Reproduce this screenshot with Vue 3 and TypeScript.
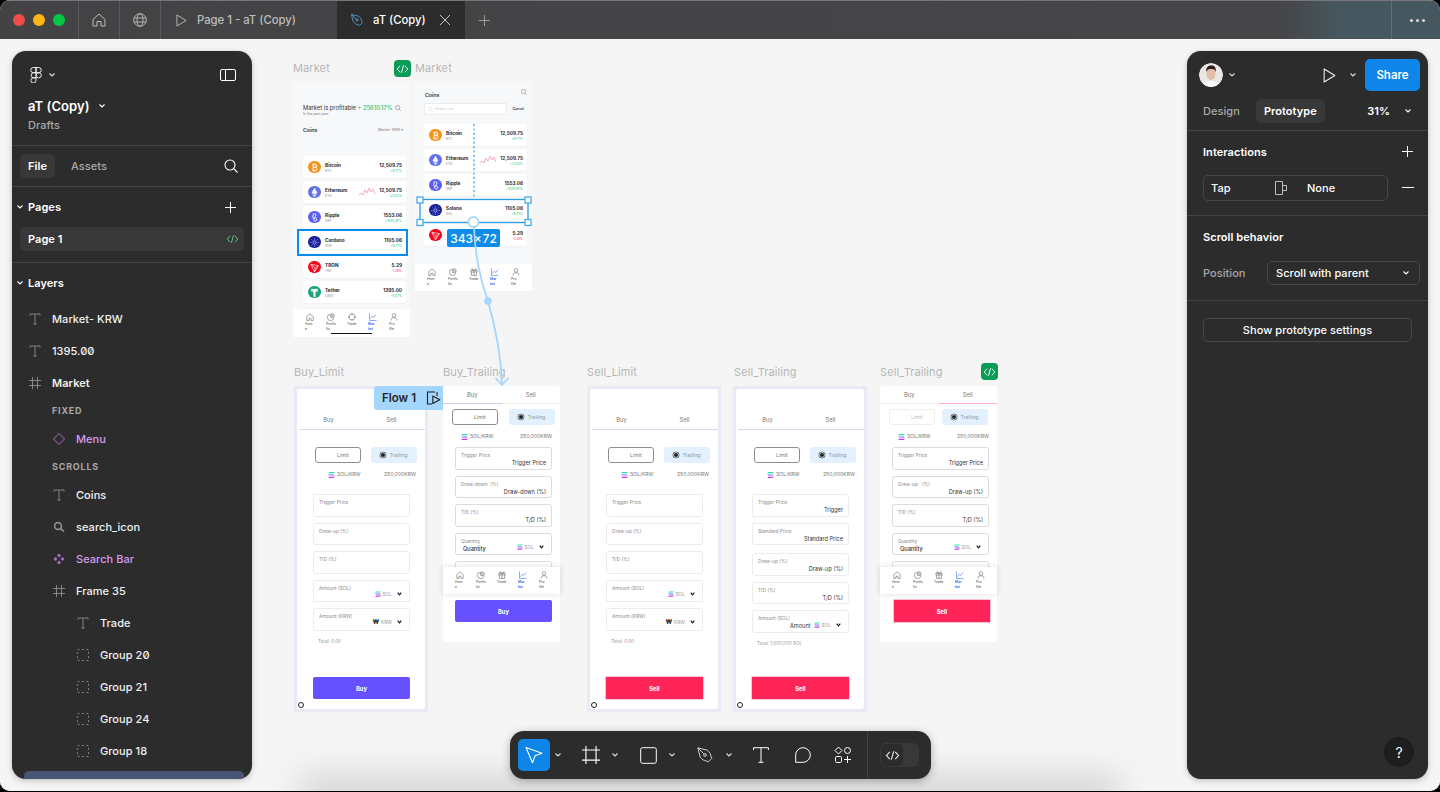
<script setup lang="ts">
type Coin = { name: string; sym: string; price: string; change: string; down?: boolean; color: string; icon: string; spark?: boolean; sel?: boolean }
type Field = { label: string; value?: string; pick?: string; left?: boolean }
type Form = { name: string; x: number; tall: boolean; side: string; soft?: boolean; faint?: boolean; total?: string; fields: Field[]; nudge?: boolean }

const labels = [
  { t: 'Market', x: 293, y: 61 }, { t: 'Market', x: 415, y: 61 },
  { t: 'Buy_Limit', x: 294, y: 365 }, { t: 'Buy_Trailing', x: 443, y: 365 },
  { t: 'Sell_Limit', x: 587, y: 365 }, { t: 'Sell_Trailing', x: 734, y: 365 }, { t: 'Sell_Trailing', x: 880, y: 365 }
]
const at = (x: number, y: number) => ({ left: `${x}px`, top: `${y - 39}px` })

const btc: Coin = { name: 'Bitcoin', sym: 'BTC', price: '12,509.75', change: '+9.77%', color: '#f7931a', icon: 'c-btc' }
const eth: Coin = { name: 'Ethereum', sym: 'ETH', price: '12,509.75', change: '+21.00%', color: '#6272e6', icon: 'c-eth', spark: true }
const xrp: Coin = { name: 'Ripple', sym: 'XRP', price: '1553.06', change: '+1000.97%', color: '#5b5ff2', icon: 'c-xrp' }
const trx: Coin = { name: 'TRON', sym: 'TRX', price: '5.29', change: '-1.38%', down: true, color: '#f5051b', icon: 'c-trx' }
const coinsA: Coin[] = [btc, eth, xrp,
  { name: 'Cardano', sym: 'ADA', price: '1105.06', change: '+9.77%', color: '#1c1f9a', icon: 'c-ada', sel: true },
  trx,
  { name: 'Tether', sym: 'USDT', price: '1395.00', change: '+0.07%', color: '#1ba27a', icon: 'c-usdt' }]
const coinsB: Coin[] = [btc, eth, xrp,
  { name: 'Solana', sym: 'SOL', price: '1105.06', change: '+9.77%', color: '#1c1f9a', icon: 'c-ada' },
  { ...trx, name: '', sym: '' }]

const navA = [
  { t: 'Hom\ne', i: 'n-home' }, { t: 'Portfo\nlio', i: 'n-pie' }, { t: 'Trade', i: 'n-coin' },
  { t: 'Mar\nket', i: 'n-chart', on: true }, { t: 'Pro\nfile', i: 'n-user' }
]
const navB = navA.map(n => (n.i === 'n-coin' ? { ...n, i: 'n-gift' } : n))

const limitFields: Field[] = [
  { label: 'Trigger Price' }, { label: 'Draw-up (%)' }, { label: 'T/D (%)' },
  { label: 'Amount (SOL)', pick: 'SOL' }, { label: 'Amount (KRW)', pick: 'KRW' }
]
const forms: Form[] = [
  { name: 'Buy_Limit', x: 294, tall: true, side: 'buy', total: 'Total: 0.00', fields: limitFields },
  {
    name: 'Buy_Trailing', x: 443, tall: false, side: 'buy', fields: [
      { label: 'Trigger Price', value: 'Trigger Price' }, { label: 'Draw-down  (%)', value: 'Draw-down (%)' },
      { label: 'T/D (%)', value: 'T/D (%)' }, { label: 'Quantity', value: 'Quantity', pick: 'SOL', left: true }, { label: 'Amount (KRW)' }
    ]
  },
  { name: 'Sell_Limit', x: 587, tall: true, side: 'sell', total: 'Total: 0.00', fields: limitFields },
  {
    name: 'Sell_Trailing', x: 733, tall: true, side: 'sell', total: 'Total: 1,000,000 SOL', nudge: true, fields: [
      { label: 'Trigger Price', value: 'Trigger' }, { label: 'Standard Price', value: 'Standard Price' },
      { label: 'Draw-up (%)', value: 'Draw-up (%)' }, { label: 'T/D (%)', value: 'T/D (%)' },
      { label: 'Amount (SOL)', value: 'Amount', pick: 'SOL' }
    ]
  },
  {
    name: 'Sell_Trailing', x: 880, tall: false, side: 'sell', faint: true, fields: [
      { label: 'Trigger Price', value: 'Trigger Price' }, { label: 'Draw-up   (%)', value: 'Draw-up (%)' },
      { label: 'T/D (%)', value: 'T/D (%)' }, { label: 'Quantity', value: 'Quantity', pick: 'SOL', left: true }, { label: 'Amount (KRW)' }
    ]
  }
]

const layers = [
  { t: 'Market- KRW', i: 'l-text', lv: 0 }, { t: '1395.00', i: 'l-text', lv: 0 }, { t: 'Market', i: 'l-frame', lv: 0, bold: true },
  { head: 'FIXED' }, { t: 'Menu', i: 'l-diamond', lv: 1, purple: true }, { head: 'SCROLLS' },
  { t: 'Coins', i: 'l-text', lv: 1 }, { t: 'search_icon', i: 'l-search', lv: 1 }, { t: 'Search Bar', i: 'l-comp', lv: 1, purple: true },
  { t: 'Frame 35', i: 'l-frame', lv: 1 }, { t: 'Trade', i: 'l-text', lv: 2 }, { t: 'Group 20', i: 'l-group', lv: 2 },
  { t: 'Group 21', i: 'l-group', lv: 2 }, { t: 'Group 24', i: 'l-group', lv: 2 }, { t: 'Group 18', i: 'l-group', lv: 2 }
]
</script>

<template>
  <svg class="defs" width="0" height="0" aria-hidden="true">
    <defs>
      <symbol id="caret" viewBox="0 0 8 6"><path d="M1.5 1.5 4 4l2.5-2.5" fill="none" stroke="currentColor" stroke-width="1.1" /></symbol>
      <symbol id="plus" viewBox="0 0 12 12"><path d="M6 0v12M0 6h12" stroke="currentColor" stroke-width="1.1" /></symbol>
      <symbol id="code" viewBox="0 0 16 12"><path d="M5 2 1.5 6 5 10M11 2l3.5 4L11 10M9.3 1.5 6.7 10.5" fill="none" stroke="currentColor" stroke-width="1.2" /></symbol>
      <symbol id="play" viewBox="0 0 12 14"><path d="M1 1v12l10-6z" fill="none" stroke="currentColor" stroke-width="1" stroke-linejoin="round" /></symbol>
      <symbol id="search" viewBox="0 0 14 14"><circle cx="6" cy="6" r="5" fill="none" stroke="currentColor" stroke-width="1.1" /><path d="m9.7 9.7 3.8 3.8" stroke="currentColor" stroke-width="1.1" /></symbol>
      <symbol id="pen" viewBox="0 0 24 24"><path d="M2.5 2.5 15 5.5c3 2.5 5 6 5 8.5l1.2 2.5-4.7 4.700L14 20c-3 0-6-2.200-8.500-5.200zM2.500 2.500l7.800 7.800" fill="none" stroke="currentColor" stroke-width="1.2" stroke-linejoin="round" /><circle cx="12" cy="12" r="1.8" fill="none" stroke="currentColor" stroke-width="1.2" /></symbol>
      <symbol id="l-text" viewBox="0 0 12 12"><path d="M1 2.500V1h10v1.500M6 1v10M4.400 11h3.200" fill="none" stroke="currentColor" stroke-width=".9" /></symbol>
      <symbol id="l-frame" viewBox="0 0 12 12"><path d="M3.500 0v12M8.500 0v12M0 3.500h12M0 8.500h12" fill="none" stroke="currentColor" stroke-width=".9" /></symbol>
      <symbol id="l-diamond" viewBox="0 0 12 12"><path d="M6 .5 11.500 6 6 11.500.5 6z" fill="none" stroke="currentColor" stroke-width="1" /></symbol>
      <symbol id="l-comp" viewBox="0 0 12 12"><path d="M6 .5 8 2.500 6 4.500 4 2.500zM9.500 4 11.500 6 9.500 8 7.500 6zM2.500 4 4.500 6 2.500 8 .5 6zM6 7.500l2 2-2 2-2-2z" fill="currentColor" /></symbol>
      <symbol id="l-search" viewBox="0 0 12 12"><circle cx="5" cy="5" r="3.400" fill="none" stroke="currentColor" stroke-width="1.700" /><path d="m7.500 7.500 3.500 3" stroke="currentColor" stroke-width="1.700" /></symbol>
      <symbol id="l-group" viewBox="0 0 12 12"><path d="M.5.5h11v11H.5z" fill="none" stroke="currentColor" stroke-width=".9" stroke-dasharray="2 2.400" /></symbol>
      <symbol id="n-home" viewBox="0 0 10 10"><path d="M1 4.500 5 1l4 3.500V9.300H6.200V6.500H3.800v2.800H1z" fill="none" stroke="currentColor" stroke-width=".6" /></symbol>
      <symbol id="n-pie" viewBox="0 0 10 10"><path d="M4.500 1.500a4 4 0 1 0 4 4h-4zM6 .8A3.500 3.500 0 0 1 9.200 4H6z" fill="none" stroke="currentColor" stroke-width=".6" /></symbol>
      <symbol id="n-gift" viewBox="0 0 10 10"><path d="M1 3h8v2H1zM1.800 5v4.300h6.400V5M5 3v6.300M5 3 3.200 1h-1L3 3M5 3l1.800-2h1L7 3" fill="none" stroke="currentColor" stroke-width=".6" /></symbol>
      <symbol id="n-coin" viewBox="0 0 10 10"><circle cx="5" cy="5" r="3.700" fill="none" stroke="currentColor" stroke-width=".6" /><path d="M5 0v2M5 8v2M0 5h2M8 5h2" stroke="currentColor" stroke-width=".6" /></symbol>
      <symbol id="n-chart" viewBox="0 0 10 10"><path d="M.6.500v8.900h8.800M1.800 7l2.300-3 1.800 1.600L9 2" fill="none" stroke="currentColor" stroke-width=".7" /></symbol>
      <symbol id="n-user" viewBox="0 0 10 10"><circle cx="5" cy="3" r="2.200" fill="none" stroke="currentColor" stroke-width=".6" /><path d="M1.500 9.500V8c0-1 1-1.900 2-1.900h3c1 0 2 .9 2 1.900v1.500" fill="none" stroke="currentColor" stroke-width=".6" /></symbol>
      <symbol id="c-btc" viewBox="0 0 12 12"><path d="M4.500 2.500V9.500M3.500 2.800h3.300a1.500 1.500 0 0 1 0 3H4.500M4.500 5.800h2.700a1.600 1.600 0 0 1 0 3.200H3.500M5.500 1.500v1.300M7 1.500v1.300M5.500 9v1.500M7 9v1.500" fill="none" stroke="#fff" stroke-width="1" /></symbol>
      <symbol id="c-eth" viewBox="0 0 12 12"><path d="M6 .8 2.800 6.200 6 8.100l3.200-1.900zM3 7.200 6 11.200l3-4L6 9z" fill="#fff" opacity=".92" /></symbol>
      <symbol id="c-xrp" viewBox="0 0 12 12"><path d="M4.800 2c2.300-.9 3.500.9 2.300 2.800L5 8c-.7 1.800 2.800 2.800 3.400.6C8.900 6.800 6.200 5.800 4.300 7M4.800 2l-.9 4" fill="none" stroke="#fff" stroke-width="1" /></symbol>
      <symbol id="c-ada" viewBox="0 0 12 12"><circle cx="6" cy="6" r="1.700" fill="none" stroke="#cfd3ff" stroke-width=".8" /><path d="M6 1.500v1.200M6 9.300v1.200M1.500 6h1.200M9.300 6h1.200M2.800 2.800l.8.8M8.400 8.400l.8.8M9.200 2.800l-.8.8M3.600 8.400l-.8.8" stroke="#cfd3ff" stroke-width=".8" /></symbol>
      <symbol id="c-trx" viewBox="0 0 12 12"><path d="M2 2.500 10.300 4 6 10.800zM2 2.500 6.700 6.500 6 10.800M6.700 6.500l3.600-2.500" fill="none" stroke="#fff" stroke-width=".7" /></symbol>
      <symbol id="c-usdt" viewBox="0 0 12 12"><path d="M2.500 2.200h7V4H7v6.500H5V4H2.500zM2 5.400c2.200-.6 5.800-.6 8 0" fill="#fff" stroke="#fff" stroke-width=".3" /></symbol>
      <symbol id="sol" viewBox="0 0 8 7"><path d="M1.500 0H8L6.500 1.400H0z" fill="#19e6b0" /><path d="M0 2.800h6.500L8 4.200H1.500z" fill="#7d6cf0" /><path d="M1.500 5.600H8L6.500 7H0z" fill="#c43ff0" /></symbol>
    </defs>
  </svg>

  <div class="window">
    <header class="titlebar">
      <div class="lights"><i class="red"></i><i class="amber"></i><i class="green"></i></div>
      <div class="cell icon-cell">
        <svg width="14" height="14" viewBox="0 0 14 14"><path d="M1 6.500 7 1l6 5.500V13H9V8.500H5V13H1z" fill="none" stroke="currentColor" stroke-width="1" stroke-linejoin="round" /></svg>
      </div>
      <div class="cell icon-cell">
        <svg width="14" height="14" viewBox="0 0 14 14"><g fill="none" stroke="currentColor" stroke-width=".9"><circle cx="7" cy="7" r="6.300" /><ellipse cx="7" cy="7" rx="3" ry="6.300" /><path d="M.8 5h12.400M.8 9h12.400" /></g></svg>
      </div>
      <div class="cell tab">
        <svg width="11" height="13"><use href="#play" /></svg>
        <span>Page 1 - aT (Copy)</span>
      </div>
      <div class="cell tab active">
        <svg class="pen-tab" width="14" height="14"><use href="#pen" /></svg>
        <span>aT (Copy)</span>
        <svg class="close" width="12" height="12" viewBox="0 0 12 12"><path d="m1 1 10 10M11 1 1 11" stroke="currentColor" stroke-width="1" /></svg>
      </div>
      <svg class="newtab" width="11" height="11"><use href="#plus" /></svg>
      <div class="dots"><i></i><i></i><i></i></div>
    </header>

    <main class="canvas">
      <span v-for="(l, i) in labels" :key="i" class="frame-label" :style="at(l.x, l.y)">{{ l.t }}</span>
      <span class="code-badge" :style="at(394, 60)"><svg width="13" height="10"><use href="#code" /></svg></span>
      <span class="code-badge" :style="at(981, 363)"><svg width="13" height="10"><use href="#code" /></svg></span>
      <i class="under-glow"></i>

      <!-- Market -->
      <section class="market first" :style="at(293, 82)">
        <div class="mk-head">
          <div class="mk-title"><span>Market is profitable</span><b>+ 25610.17%</b><svg width="6" height="6"><use href="#search" /></svg></div>
          <div class="mk-sub">In the past year</div>
          <div class="mk-coins"><b>Coins</b><span>Market- KRW ▾</span></div>
        </div>
        <div class="rows">
          <div v-for="c in coinsA" :key="c.sym" class="row" :class="{ sel: c.sel }">
            <span class="coin" :style="{ background: c.color }"><svg width="12" height="12"><use :href="'#' + c.icon" /></svg></span>
            <div class="names"><b>{{ c.name }}</b><small>{{ c.sym }}</small></div>
            <svg v-if="c.spark" class="spark" width="17" height="9" viewBox="0 0 17 9"><path d="M0 8l2-2 2 2 2-5 2 3 2-5 2 4 2-3 2 5" fill="none" stroke="#f0708f" stroke-width=".6" /></svg>
            <div class="prices"><b>{{ c.price }}</b><small :class="{ down: c.down }">{{ c.change }}</small></div>
          </div>
        </div>
        <nav class="tabbar">
          <div v-for="n in navA" :key="n.i" class="nav-item" :class="{ on: n.on }"><svg width="8" height="8"><use :href="'#' + n.i" /></svg><span>{{ n.t }}</span></div>
          <i class="home-bar"></i>
        </nav>
      </section>

      <section class="market second" :style="at(415, 82)">
        <div class="mk2-head">
          <div class="mk2-title"><b>Coins</b><svg width="6" height="6"><use href="#search" /></svg></div>
          <div class="mk2-search">
            <div class="searchbox"><svg width="5" height="5"><use href="#search" /></svg><span>Search coin</span></div>
            <b>Cancel</b>
          </div>
        </div>
        <div class="rows">
          <div v-for="c in coinsB" :key="c.icon + c.price" class="row">
            <span class="coin" :style="{ background: c.color }"><svg width="12" height="12"><use :href="'#' + c.icon" /></svg></span>
            <div class="names"><b>{{ c.name }}</b><small>{{ c.sym }}</small></div>
            <svg v-if="c.spark" class="spark" width="17" height="9" viewBox="0 0 17 9"><path d="M0 8l2-2 2 2 2-5 2 3 2-5 2 4 2-3 2 5" fill="none" stroke="#f0708f" stroke-width=".6" /></svg>
            <div class="prices"><b>{{ c.price }}</b><small :class="{ down: c.down }">{{ c.change }}</small></div>
          </div>
        </div>
        <nav class="tabbar">
          <div v-for="n in navB" :key="n.i" class="nav-item" :class="{ on: n.on }"><svg width="8" height="8"><use :href="'#' + n.i" /></svg><span>{{ n.t }}</span></div>
        </nav>
      </section>

      <!-- Trade forms -->
      <section v-for="f in forms" :key="f.x" class="form" :class="[f.tall ? 'tall' : 'short', f.side, { faint: f.faint, nudge: f.nudge }]" :style="at(f.x, 386)">
        <div class="sheet">
          <div class="form-tabs">
            <span class="t-buy">Buy</span>
            <span class="t-sell">Sell</span>
          </div>
          <div class="toggles">
            <div class="tg limit">Limit</div>
            <div class="tg trailing"><i></i>Trailing</div>
          </div>
          <div class="pair">
            <span class="pair-name"><svg width="7" height="6"><use href="#sol" /></svg>SOL/KRW</span>
            <span>250,000KRW</span>
          </div>
          <div class="fields">
            <div v-for="fd in f.fields" :key="fd.label" class="field" :class="{ 'has-left': fd.left }">
              <label>{{ fd.label }}</label>
              <output v-if="fd.value">{{ fd.value }}</output>
              <div v-if="fd.pick" class="pick">
                <svg v-if="fd.pick === 'SOL'" width="6" height="6"><use href="#sol" /></svg>
                <b v-else>₩</b>
                <span>{{ fd.pick }}</span>
                <svg class="pick-caret" width="5" height="4" viewBox="0 0 5 4"><path d="M.7.7 2.500 2.800 4.300.7" fill="none" stroke="#111" stroke-width="1.100" /></svg>
              </div>
            </div>
          </div>
          <div v-if="f.total" class="total">{{ f.total }}</div>
          <nav v-if="!f.tall" class="tabbar floating">
            <div v-for="n in navB" :key="n.i" class="nav-item" :class="{ on: n.on }"><svg width="8" height="8"><use :href="'#' + n.i" /></svg><span>{{ n.t }}</span></div>
          </nav>
          <div class="cta">{{ f.side === 'buy' ? 'Buy' : 'Sell' }}</div>
          <i v-if="f.tall" class="start-dot"></i>
        </div>
      </section>

      <!-- Prototype overlays -->
      <div class="flow-tag"><b>Flow 1</b>
        <svg width="15" height="14" viewBox="0 0 15 14"><path d="M9 1H1.500v12H6M11 1v4" fill="none" stroke="#1f1f1f" stroke-width="1.100" /><path d="M6.800 5v7.500l7-3.700z" fill="none" stroke="#1f1f1f" stroke-width="1.100" stroke-linejoin="round" /></svg>
      </div>
      <div class="size-tag">343 × 72</div>
      <svg class="wires" width="1440" height="752" viewBox="0 39 1440 752">
        <path d="M474 124V198" stroke="#3fa9f5" stroke-width="1.300" stroke-dasharray="2.200 2.200" fill="none" />
        <rect x="420" y="199.500" width="108" height="23" fill="none" stroke="#2d9fea" stroke-width="1.300" />
        <g fill="#fff" stroke="#45aaee" stroke-width="1.300">
          <rect x="417" y="197" width="6" height="6" /><rect x="525" y="197" width="6" height="6" />
          <rect x="417" y="219.500" width="6" height="6" /><rect x="525" y="219.500" width="6" height="6" />
        </g>
        <path d="M474 226C475 262 483 287 488 301C494 322 501 352 502 385" fill="none" stroke="#a5d6fd" stroke-width="1.800" />
        <path d="M495.500 378 502 385l6.500-7" fill="none" stroke="#a5d6fd" stroke-width="1.800" />
        <circle cx="488" cy="301" r="3.800" fill="#a5d6fd" />
        <circle cx="473.500" cy="222" r="5" fill="#fff" stroke="#a5d6fd" stroke-width="1.800" />
      </svg>

      <!-- Left panel -->
      <aside class="panel left">
        <div class="lp-top">
          <div class="lp-logo">
            <svg width="12" height="16" viewBox="0 0 12 16"><g fill="none" stroke="#fff" stroke-width=".9"><path d="M6 .5H3.300a2.600 2.600 0 0 0 0 5.200H6zM6 .5h2.700a2.600 2.600 0 0 1 0 5.200H6zM6 5.700H3.300a2.600 2.600 0 0 0 0 5.100H6zM6 10.800H3.300a2.600 2.600 0 1 0 2.700 2.600z" /><circle cx="8.700" cy="8.300" r="2.600" /></g></svg>
            <svg class="c" width="8" height="6"><use href="#caret" /></svg>
            <svg class="layout" width="16" height="12" viewBox="0 0 16 12"><rect x=".5" y=".5" width="15" height="11" rx="1.500" fill="none" stroke="#fff" /><path d="M5.500.5v11" stroke="#fff" /></svg>
          </div>
          <div class="lp-name"><b>aT (Copy)</b><svg width="8" height="6"><use href="#caret" /></svg></div>
          <div class="lp-drafts">Drafts</div>
        </div>
        <div class="lp-tabs">
          <span class="pill">File</span><span class="dim">Assets</span>
          <svg width="14" height="14"><use href="#search" /></svg>
        </div>
        <div class="lp-pages">
          <div class="sec-head"><svg width="8" height="6"><use href="#caret" /></svg><b>Pages</b><svg class="add" width="11" height="11"><use href="#plus" /></svg></div>
          <div class="page-row"><span>Page 1</span><svg width="13" height="10"><use href="#code" /></svg></div>
        </div>
        <div class="lp-layers">
          <div class="sec-head"><svg width="8" height="6"><use href="#caret" /></svg><b>Layers</b></div>
          <div class="layer-list">
            <template v-for="(l, i) in layers" :key="i">
              <div v-if="l.head" class="layer-head">{{ l.head }}</div>
              <div v-else class="layer" :class="['lv' + l.lv, { purple: l.purple, bold: l.bold }]">
                <svg width="12" height="12"><use :href="'#' + l.i" /></svg><span>{{ l.t }}</span>
              </div>
            </template>
            <div class="layer-selected"></div>
          </div>
        </div>
      </aside>

      <!-- Right panel -->
      <aside class="panel right">
        <div class="rp-top">
          <svg class="avatar" width="24" height="24" viewBox="0 0 24 24"><defs><clipPath id="av"><circle cx="12" cy="12" r="12" /></clipPath></defs><g clip-path="url(#av)"><rect width="24" height="24" fill="#e9e6e3" /><path d="M3 24c1-5 5-6 9-6s8 1 9 6z" fill="#fbfbfb" /><ellipse cx="12" cy="11" rx="4.500" ry="6" fill="#e3bda6" /><path d="M7.300 9c-.5-5 2-6.500 5-6.500s5 1.500 4.500 6.500c-1-2.500-2-3-4.500-3s-4 .5-5 3z" fill="#27201d" /></g></svg>
          <svg class="c" width="8" height="6"><use href="#caret" /></svg>
          <span class="grow"></span>
          <svg class="rp-play" width="13" height="15"><use href="#play" /></svg>
          <svg class="c" width="8" height="6"><use href="#caret" /></svg>
          <button class="share">Share</button>
        </div>
        <div class="rp-tabs">
          <span class="dim">Design</span><span class="pill">Prototype</span><span class="grow"></span><span class="zoom">31%</span>
          <svg width="8" height="6"><use href="#caret" /></svg>
        </div>
        <div class="rp-sec inter">
          <div class="rp-head"><b>Interactions</b><svg width="11" height="11"><use href="#plus" /></svg></div>
          <div class="tap-line">
            <div class="tap">
              <span class="tap-l">Tap</span>
              <svg width="12" height="14" viewBox="0 0 12 14"><path d="M7.500.5H.5v13h7zM7.500 4.500h4v5h-4" fill="none" stroke="#cfcfcf" stroke-width=".9" /></svg>
              <span class="tap-n">None</span>
            </div>
            <i class="minus"></i>
          </div>
        </div>
        <div class="rp-sec scroll">
          <b>Scroll behavior</b>
          <div class="pos-line"><span class="dim">Position</span>
            <div class="select"><span>Scroll with parent</span><svg width="8" height="6"><use href="#caret" /></svg></div>
          </div>
        </div>
        <div class="rp-sec proto"><div class="proto-btn">Show prototype settings</div></div>
        <div class="help">?</div>
      </aside>

      <!-- Toolbar -->
      <div class="toolbar">
        <div class="tool cur"><svg width="20" height="20" viewBox="0 0 20 20"><path d="M2 2.500 18 8.300l-7 2.400-2.500 7z" fill="none" stroke="#fff" stroke-width="1.100" stroke-linejoin="round" /></svg></div>
        <svg class="tc c1" width="8" height="6"><use href="#caret" /></svg>
        <svg class="ti" width="18" height="18" viewBox="0 0 16 16"><path d="M3.500 0v16M12.500 0v16M0 3.500h16M0 12.500h16" fill="none" stroke="#fff" stroke-width="1" /></svg>
        <svg class="tc" width="8" height="6"><use href="#caret" /></svg>
        <svg class="ti tr" width="17" height="17" viewBox="0 0 17 17"><rect x=".7" y=".7" width="15.600" height="15.600" rx="1.800" fill="none" stroke="#fff" stroke-width="1" /></svg>
        <svg class="tc" width="8" height="6"><use href="#caret" /></svg>
        <svg class="ti" width="18" height="18"><use href="#pen" /></svg>
        <svg class="tc" width="8" height="6"><use href="#caret" /></svg>
        <svg class="ti tt" width="16" height="16" viewBox="0 0 16 16"><path d="M.6 3V.7h14.800V3M8 .7v14.600M5.500 15.300h5" fill="none" stroke="#fff" stroke-width="1" /></svg>
        <svg class="ti tb" width="16" height="16" viewBox="0 0 16 16"><path d="M.7 15.300V8A7.300 7.300 0 1 1 8 15.300z" fill="none" stroke="#fff" stroke-width="1" stroke-linejoin="round" /></svg>
        <svg class="ti ta" width="18" height="18" viewBox="0 0 18 18"><g fill="none" stroke="#fff" stroke-width="1"><path d="M4.500 1 8 4.500 4.500 8 1 4.500z" /><circle cx="13.500" cy="4.500" r="3" /><rect x="1.500" y="10.500" width="6" height="6" rx="1.200" /><path d="M13.500 10v7M10 13.500h7" /></g></svg>
        <i class="tsep"></i>
        <div class="dev"><span class="knob"><svg width="15" height="11"><use href="#code" /></svg></span></div>
      </div>
    </main>
  </div>
</template>

<style>
html, body { margin: 0; background: #000; }
</style>

<style scoped>
.defs { position: absolute; }
.window { width: 1440px; height: 791px; border-radius: 10px; overflow: hidden; display: flex; flex-direction: column; font-family: Inter, "Liberation Sans", sans-serif; background: #f5f5f5; color: #fff; }
svg { display: block; flex: none; }
b { font-weight: 600; }

/* title bar */
.titlebar { height: 39px; flex: none; box-sizing: border-box; border-top: 1px solid #77777a; display: flex; align-items: stretch; background: linear-gradient(90deg, #434345 0, #464648 1282px, #46575f 1340px, #46575f 100%); color: #bdbdbd; font-size: 11.300px; font-weight: 500; position: relative; }
.lights { width: 78px; display: flex; align-items: center; gap: 8px; padding-left: 13px; box-sizing: border-box; }
.lights i { width: 12px; height: 12px; border-radius: 50%; }
.red { background: #ee4b4b; } .amber { background: #fdb70f; } .green { background: #05c943; }
.cell { display: flex; align-items: center; border-left: 1px solid #5a5a5c; box-sizing: border-box; }
.icon-cell { width: 41px; justify-content: center; }
.tab { width: 177px; padding-left: 15px; gap: 10px; }
.tab.active { width: 128px; background: #2c2c2c; color: #fff; border-left: 0; padding-left: 13px; gap: 9px; }
.pen-tab { color: #5db6ee; }
.close { margin-left: 4px; color: #c8c8c8; }
.newtab { align-self: center; margin-left: 14px; color: #9a9a9a; }
.dots { margin-left: auto; width: 49px; box-sizing: border-box; border-left: 1px solid #607078; padding-left: 18px; display: flex; gap: 3px; align-items: center; }
.dots i { width: 3px; height: 3px; background: #d8d8d8; border-radius: 50%; }

/* canvas */
.canvas { flex: 1; position: relative; overflow: hidden; background: #f5f5f5; color: #222; }
.under-glow { position: absolute; left: 300px; top: 736px; width: 820px; height: 34px; background: rgba(0, 0, 0, .13); filter: blur(16px); }
.frame-label { position: absolute; font-size: 11px; color: #b5b5b5; line-height: 14px; letter-spacing: .1px; }
.code-badge { position: absolute; width: 17px; height: 17px; border-radius: 4px; background: #0a9c57; color: #fff; display: flex; align-items: center; justify-content: center; }

/* market */
.market { position: absolute; width: 117px; background: #f7f8fa; display: flex; flex-direction: column; }
.market.first { height: 255px; }
.market.second { height: 209px; }
.mk-head { height: 74px; padding: 22px 5px 0 10px; box-sizing: border-box; flex: none; }
.mk-title { display: flex; align-items: center; gap: 1.500px; font-size: 5.800px; line-height: 7px; color: #333; white-space: nowrap; }
.mk-title b { color: #17c77d; font-weight: 500; }
.mk-title svg { margin-left: 1px; color: #555; }
.mk-sub { font-size: 3.500px; color: #777; line-height: 5px; margin-top: 1px; }
.mk-coins { display: flex; justify-content: space-between; align-items: center; margin-top: 10px; font-size: 5.200px; padding-right: 2px; color: #333; }
.mk-coins span { font-size: 3.500px; color: #777; }
.mk2-head { height: 42px; flex: none; box-sizing: border-box; padding: 10px 5px 0 10px; }
.mk2-title { display: flex; justify-content: space-between; align-items: center; font-size: 5.200px; line-height: 6px; color: #333; }
.mk2-title svg { color: #666; position: relative; top: -3px; }
.mk2-search { display: flex; align-items: center; justify-content: space-between; margin-top: 5px; }
.searchbox { width: 83px; height: 12px; margin-left: -1px; background: #fff; border: .5px solid #ececec; display: flex; align-items: center; gap: 2px; padding-left: 3px; box-sizing: border-box; color: #c9c9c9; font-size: 3.400px; }
.mk2-search b { font-size: 3.400px; color: #444; margin-right: 3px; }
.rows { display: flex; flex-direction: column; gap: 2.600px; }
.first .rows { padding: 0 4px 0 10px; }
.second .rows { padding: 0 5px 0 9px; }
.row { height: 22.400px; background: #fff; border-radius: 2.500px; display: flex; align-items: center; position: relative; padding: 0 4px 0 5px; box-sizing: border-box; box-shadow: 0 .5px 2px rgba(30, 40, 80, .04); }
.row.sel::after { content: ""; position: absolute; left: -6px; right: -2px; top: -2px; bottom: -3px; border: 2px solid #0d8ce9; }
.coin { width: 12.600px; height: 12.600px; border-radius: 50%; display: flex; align-items: center; justify-content: center; flex: none; margin-right: 4.500px; }
.coin svg { width: 11px; height: 11px; }
.names, .prices { display: flex; flex-direction: column; gap: 1px; line-height: 5px; margin-top: 2px; }
.names b, .prices b { font-size: 4.700px; color: #2a2a2a; font-weight: 700; }
.names small, .prices small { font-size: 3.200px; color: #888; }
.prices { margin-left: auto; align-items: flex-end; }
.prices small { color: #17c77d; }
.prices small.down { color: #f0325f; }
.spark { position: absolute; right: 30px; top: 6px; }
.tabbar { margin-top: auto; height: 28px; background: #fff; flex: none; display: flex; padding: 4px 0 0 6.500px; box-sizing: border-box; position: relative; }
.second .tabbar { height: 27px; }
.nav-item { width: 21px; display: flex; flex-direction: column; align-items: center; color: #454545; font-size: 3.400px; line-height: 5px; white-space: pre-line; }
.nav-item span { width: 10px; margin-top: 1px; }
.nav-item.on { color: #2a6df4; font-weight: 600; }
.home-bar { position: absolute; left: 38px; bottom: 3px; width: 41px; height: 1.500px; background: #111; }

/* form frames */
.form { position: absolute; box-sizing: border-box; font-size: 5px; color: #777; }
.form.tall { width: 134px; height: 326px; background: #e8eaf4; padding: 3px; }
.form.short { width: 117px; height: 256px; }
.sheet { background: #fff; border-radius: 3px; height: 100%; position: relative; display: flex; flex-direction: column; box-sizing: border-box; }
.form-tabs { display: flex; flex: none; text-align: center; }
.tall .form-tabs { height: 41px; margin: 0 0 0 2px; align-items: flex-end; padding-bottom: 6px; box-sizing: border-box; border-bottom: 1px solid #d8d7f5; }
.tall .form-tabs span { flex: none; width: 63px; line-height: 7px; font-size: 5.800px; }
.tall .t-buy { margin-left: -2px; }
.short .form-tabs { height: 18px; }
.short .form-tabs span { flex: 1; line-height: 17px; border-bottom: 1px solid #eee; font-size: 5.800px; }
.short.buy .t-buy { border-bottom-color: #cfcdf8; }
.short.sell .t-sell { border-bottom-color: #ffb3c4; }
.toggles { display: flex; flex: none; justify-content: space-between; }
.tall .toggles { margin: 17px 8px 0 18px; }
.short .toggles { margin: 5px 5px 0 9px; }
.short.faint .toggles { margin-right: 9px; }
.tg { width: 46px; height: 16px; box-sizing: border-box; display: flex; align-items: center; justify-content: center; border-radius: 3px; font-size: 5.200px; }
.tg.limit { border: .8px solid #8e8e8e; background: #fff; justify-content: flex-start; padding-left: 21px; }
.faint .tg.limit { border-color: #eee; color: #bbb; }
.tg.trailing { background: #e2f1fd; color: #8a9aa8; gap: 2px; }
.tg.trailing i { width: 4px; height: 4px; background: #222; border-radius: 50%; box-shadow: 0 0 0 .7px #e2f1fd, 0 0 0 1.300px #333; margin-right: 3px; }
.pair { display: flex; flex: none; justify-content: space-between; align-items: center; font-size: 5.100px; line-height: 7px; }
.tall .pair { margin: 8px 9px 0 31px; }
.short .pair { margin: 8px 8px 0 18px; }
.pair-name { display: flex; align-items: center; gap: 2px; }
.fields { display: flex; flex-direction: column; gap: 6px; flex: none; }
.tall .fields { margin: 16px 15px 0 16px; }
.short .fields { margin: 7px 8px 0 12px; height: 120px; overflow: hidden; }
.field { height: 22.500px; flex: none; box-sizing: border-box; border: .7px solid #ececec; border-radius: 2.500px; display: grid; grid-template-columns: 1fr auto; grid-template-rows: auto 1fr; padding: 5px 5px 0 5px; }
.short .field { border-color: #dcdcdc; }
.nudge .field:nth-child(3) { margin-top: 2px; }
.field label { font-size: 4.800px; line-height: 5px; color: #8b8b8b; grid-column: 1; white-space: pre; }
.field output { grid-column: 1; font-size: 5.600px; line-height: 11px; color: #333; text-align: right; font-weight: 400; white-space: nowrap; }
.field:not(:has(.pick)) output { grid-column: 1 / 3; }
.field.has-left output { text-align: left; padding-left: 2px; font-weight: 500; }
.pick { grid-column: 2; grid-row: 1 / 3; align-self: center; display: flex; align-items: center; gap: 2px; font-size: 4.800px; color: #9a9a9a; padding: 0 2px 0 3px; margin-top: 1px; }
.pick b { font-size: 6px; color: #222; font-weight: 700; line-height: 6px; }
.pick-caret { margin-left: 3px; }
.total { margin: 8px 0 0 21px; font-size: 4.600px; line-height: 6px; color: #999; }
.cta { height: 22px; display: flex; align-items: center; justify-content: center; color: #fff; font-size: 5.800px; font-weight: 700; flex: none; }
.tall .cta { position: absolute; left: 16px; width: 97px; bottom: 10px; }
.short .cta { margin: 6px 8px 0 12px; }
.short.faint .cta { margin: 6px 7px 0 14px; }
.buy .cta { background: #6750ff; border-radius: 2px; }
.sell .cta { background: #ff2559; box-shadow: 0 0 0 .5px #ff8aa6; }
.start-dot { position: absolute; left: 1px; bottom: 1px; width: 6px; height: 6px; box-sizing: border-box; border: 1px solid #222; border-radius: 50%; background: #fff; }
.tabbar.floating { margin-top: 0; height: 27px; box-shadow: 0 0 6px rgba(0, 0, 0, .14); z-index: 1; }

/* overlays */
.flow-tag { position: absolute; left: 374px; top: 347px; width: 69px; height: 24px; background: #a3d5fd; border-radius: 3px 0 0 3px; box-sizing: border-box; display: flex; align-items: center; padding-left: 8px; gap: 10px; font-size: 11.500px; color: #262626; }
.wires { position: absolute; left: 0; top: 0; pointer-events: none; }
.size-tag { position: absolute; left: 447px; top: 190px; width: 53px; height: 18px; background: #0d8ce9; border-radius: 2px; color: #fff; display: flex; align-items: center; justify-content: center; font-size: 12px; font-weight: 500; white-space: nowrap; word-spacing: -2.500px; }

/* panels */
.panel { position: absolute; top: 12px; height: 728px; background: #2c2c2c; border-radius: 14px; color: #fff; font-size: 11px; letter-spacing: .05px; font-weight: 500; overflow: hidden; box-shadow: 0 2px 6px rgba(0, 0, 0, .2), 0 0 1px rgba(0, 0, 0, .3); display: flex; flex-direction: column; }
.panel.left { left: 12px; width: 240px; }
.panel.right { right: 12px; width: 241px; }
.dim { color: #a9a9a9; }
.pill { background: #383838; border-radius: 5px; color: #fff; font-weight: 600; }
.grow { flex: 1; }
.c { color: #ddd; }
.lp-top { height: 95px; flex: none; border-bottom: 1px solid #444; box-sizing: border-box; padding: 16px 16px 0; }
.lp-logo { display: flex; align-items: center; height: 16px; padding-left: 2px; gap: 6px; }
.layout { margin-left: auto; }
.lp-name { display: flex; align-items: center; gap: 8px; margin-top: 15px; font-size: 13px; line-height: 16px; }
.lp-drafts { margin-top: 3px; color: #a9a9a9; line-height: 16px; }
.lp-tabs { height: 41px; flex: none; border-bottom: 1px solid #444; box-sizing: border-box; display: flex; align-items: center; padding-left: 8px; }
.lp-tabs .pill { width: 35px; height: 24px; display: flex; align-items: center; justify-content: center; }
.lp-tabs .dim { margin-left: 16px; }
.lp-tabs svg { margin-left: auto; margin-right: 14px; }
.lp-pages { height: 76px; flex: none; border-bottom: 1px solid #444; box-sizing: border-box; padding: 0 8px; }
.sec-head { display: flex; align-items: center; height: 40px; margin-left: -4px; gap: 4px; }
.sec-head b { font-weight: 600; }
.sec-head .add { margin-left: auto; margin-right: 8px; }
.page-row { height: 24px; background: #383838; border-radius: 5px; display: flex; align-items: center; justify-content: space-between; padding: 0 5px 0 8px; font-weight: 600; color: #57c987; }
.page-row span { color: #fff; }
.lp-layers { flex: 1; padding-left: 8px; overflow: hidden; min-height: 0; }
.layer-head { height: 24px; padding-left: 32px; line-height: 24px; font-size: 9px; font-weight: 700; color: #a8a8a8; letter-spacing: .8px; }
.layer { height: 32px; display: flex; align-items: center; color: #f2f2f2; gap: 11px; font-feature-settings: "zero"; }
.layer svg { color: #8c8c8c; }
.lv0 { padding-left: 9px; } .lv1 { padding-left: 33px; } .lv2 { padding-left: 57px; }
.layer.bold { font-weight: 600; }
.layer.purple { color: #d89bf0; }
.layer.purple svg { color: #a471c0; }
.layer-selected { height: 24px; margin: 4px 8px 0 4px; background: #4a5475; border-radius: 5px; }

.rp-top { height: 48px; flex: none; display: flex; align-items: center; padding: 0 8px 0 12px; gap: 5px; }
.avatar { border-radius: 50%; }
.rp-play { color: #eee; margin-right: 8px; }
.share { width: 55px; height: 32px; margin-left: 3px; border: 0; background: #0d86e8; border-radius: 5px; color: #fff; font: 600 11.500px Inter, sans-serif; }
.rp-tabs { flex: none; padding: 0 16px 7px; display: flex; align-items: center; border-bottom: 1px solid #444; height: 24px; }
.rp-tabs .pill { height: 24px; width: 69px; display: flex; align-items: center; justify-content: center; margin-left: 16px; }
.zoom { font-weight: 600; margin-right: 14px; }
.rp-sec { border-bottom: 1px solid #444; box-sizing: border-box; flex: none; }
.inter { height: 85px; padding: 0 8px 0 16px; }
.rp-head { height: 41px; display: flex; align-items: center; justify-content: space-between; padding-right: 7px; }
.rp-head b, .scroll > b { font-weight: 600; }
.tap-line { display: flex; align-items: center; margin-top: 3px; }
.tap { width: 185px; height: 26px; border: 1px solid #474747; border-radius: 5px; box-sizing: border-box; display: flex; align-items: center; padding-left: 7px; }
.tap-l { width: 64px; }
.tap-n { margin-left: 20px; }
.minus { width: 12px; height: 1px; background: #fff; margin: -1px 0 0 14px; }
.scroll { height: 85px; padding: 14px 8px 0 16px; }
.scroll > b { display: block; line-height: 15px; }
.pos-line { display: flex; align-items: center; margin-top: 16px; }
.select { width: 153px; margin-left: auto; height: 24px; border: 1px solid #474747; border-radius: 5px; box-sizing: border-box; display: flex; align-items: center; justify-content: space-between; padding: 0 9px 0 8px; }
.proto { border: 0; padding: 17px 16px 0; }
.proto-btn { height: 24px; border: 1px solid #474747; border-radius: 5px; box-sizing: border-box; display: flex; align-items: center; justify-content: center; }
.help { position: absolute; left: 197px; bottom: 12px; width: 30px; height: 30px; border-radius: 50%; background: #1e1e1e; display: flex; align-items: center; justify-content: center; font-size: 14px; font-weight: 400; }

.toolbar { position: absolute; left: 510px; top: 692px; width: 421px; height: 48px; box-sizing: border-box; background: #2c2c2c; border-radius: 14px; display: flex; align-items: center; padding-left: 8px; box-shadow: 0 2px 8px rgba(0, 0, 0, .3); color: #ddd; }
.tool.cur { width: 32px; height: 32px; background: #0d86e8; border-radius: 5px; display: flex; align-items: center; justify-content: center; }
.tc { margin-left: 11px; }
.tc.c1 { margin-left: 4px; }
.ti { margin-left: 20px; }
.ti.tr { margin-left: 21px; }
.ti.tb { margin-left: 26px; }
.ti.ta { margin-left: 23px; }
.tsep { width: 1px; height: 48px; background: #444; margin-left: 15px; }
.dev { width: 39px; height: 24px; margin-left: 12px; background: #383838; border-radius: 6px; display: flex; }
.knob { width: 22px; height: 22px; margin: 1px; background: #2c2c2c; border-radius: 5px; display: flex; align-items: center; justify-content: center; color: #eee; }
</style>
